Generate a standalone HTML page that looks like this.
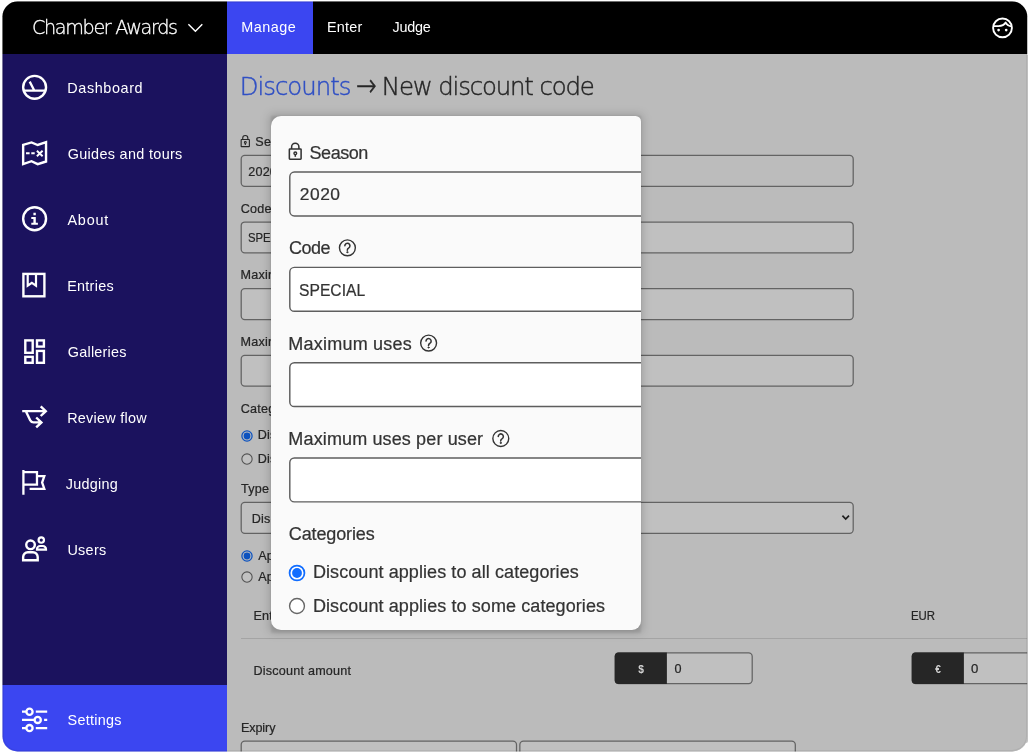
<!DOCTYPE html>
<html lang="en"><head><meta charset="utf-8"><title>New discount code</title>
<style>
html,body{margin:0;padding:0;background:#fff;}
body{width:1028px;height:755px;overflow:hidden;position:relative;font-family:'Liberation Sans',sans-serif;}
#app{position:absolute;left:0;top:0;width:1028px;height:755px;overflow:hidden;clip-path:inset(1.5px 0.8px 3.55px 2.5px round 15px);background:#bbbbbb;}
#app *{position:absolute;box-sizing:border-box;}
#app nav,#app h1,#app form{left:0;top:0;margin:0;padding:0;font:inherit;}
.t{white-space:pre;line-height:1;}
main .t,#popi .t{-webkit-text-stroke:.22px currentColor;}
main .t.lt{-webkit-text-stroke:.42px currentColor;}
main,aside,header,#popi{will-change:transform;}
header{left:0;top:0;width:1028px;height:54px;background:#000;}
.tab-on{left:227px;top:0;width:86px;height:54px;background:#3b46f1;}
aside{left:0;top:54px;width:227px;height:701px;background:#1b125e;}
.set{left:0;top:631px;width:227px;height:70px;background:#3b46f1;}
main{left:227px;top:54px;width:801px;height:701px;background:#bbbbbb;}
.hr{height:1.3px;background:#a4a4a4;}
#pop{left:271px;top:116px;width:369.7px;height:514.4px;border-radius:10px 5.5px 9px 10px;background:#fafafa;}
#popsh{left:270px;top:115px;width:371.7px;height:517.4px;background:rgba(0,0,0,.2);filter:blur(5px);border-radius:2px;}
#popsh1{left:270.8px;top:116px;width:370.6px;height:516.6px;background:rgba(0,0,0,.085);filter:blur(1.1px);}
#popc{left:0;top:0;width:369.7px;height:514.4px;border-radius:10px 5.5px 9px 10px;overflow:hidden;}
#popi{left:-271px;top:-116px;width:1028px;height:755px;}
.rstrip{position:absolute;left:1026px;top:55px;width:2px;height:688px;background:#c3c3c3;border-radius:0 0 2px 0;}
.edge{left:2.5px;top:1.5px;width:1024.7px;height:749.8px;border-radius:15px;box-shadow:inset 0 0 0 1px rgba(0,0,0,.06);pointer-events:none;}
</style></head>
<body><div class="rstrip"></div><div id="app">
<main>
<h1><span class="t lt" style="left:12.63px;top:21.00px;font-size:24.4px;letter-spacing:-0.988px;color:#2f4fc4;font-family:'DejaVu Sans Light','DejaVu Sans','Liberation Sans',sans-serif;font-weight:200;">Discounts</span>
<span class="t lt" style="left:129.09px;top:21.00px;font-size:24.4px;letter-spacing:0.000px;color:#262626;font-family:'DejaVu Sans Light','DejaVu Sans','Liberation Sans',sans-serif;font-weight:200;transform:scaleX(1.0085);transform-origin:0 0;transform:translateY(-1.4px) scale(1.01,1.3);transform-origin:0 12.2px;">→</span>
<span class="t lt" style="left:154.79px;top:21.00px;font-size:24.4px;letter-spacing:-1.144px;color:#262626;font-family:'DejaVu Sans Light','DejaVu Sans','Liberation Sans',sans-serif;font-weight:200;">New discount code</span></h1>
<form>
<svg style="left:9px;top:76px" width="20" height="22" viewBox="236 130 20 22"><g transform="translate(240.7 135.0) scale(0.7)" fill="none" stroke="#262626" stroke-width="1.6"><rect x="0.65" y="6.4" width="11.75" height="10.2" rx="0.6"/><path d="M2.9 6.4V4.3A3.65 3.65 0 0 1 10.2 4.3V6.4"/><circle cx="6.6" cy="10.7" r="1.35" stroke-width="1.4720000000000002"/><path d="M6.6 12V14.2"/></g></svg>
<span class="t" style="left:28.35px;top:82.00px;font-size:12.6px;letter-spacing:0.220px;color:#262626;">Season</span>
<svg class="bx" style="left:12px;top:99px" width="617" height="36" viewBox="239 153 617 36"><rect x="241.2" y="155.3" width="612.00" height="31.00" rx="3.6" fill="#bcbcbc" stroke="#636363" stroke-width="1.25"/></svg>
<span class="t" style="left:21.20px;top:112.00px;font-size:12.6px;letter-spacing:0.220px;color:#262626;">2020</span>
<span class="t" style="left:13.75px;top:149.00px;font-size:12.6px;letter-spacing:0.220px;color:#262626;">Code</span>
<svg class="bx" style="left:12px;top:166px" width="617" height="35" viewBox="239 220 617 35"><rect x="241.2" y="222.0" width="612.00" height="30.90" rx="3.6" fill="#c0c0c0" stroke="#636363" stroke-width="1.25"/></svg>
<span class="t" style="left:21.15px;top:178.00px;font-size:12.6px;letter-spacing:0.000px;color:#262626;transform:scaleX(.9);transform-origin:0 0;">SPECIAL</span>
<span class="t" style="left:13.60px;top:215.00px;font-size:12.6px;letter-spacing:0.220px;color:#262626;">Maximum uses</span>
<svg class="bx" style="left:12px;top:232px" width="617" height="36" viewBox="239 286 617 36"><rect x="241.2" y="288.7" width="612.00" height="30.80" rx="3.6" fill="#c0c0c0" stroke="#636363" stroke-width="1.25"/></svg>
<span class="t" style="left:13.60px;top:282.00px;font-size:12.6px;letter-spacing:0.220px;color:#262626;">Maximum uses per user</span>
<svg class="bx" style="left:12px;top:299px" width="617" height="36" viewBox="239 353 617 36"><rect x="241.2" y="355.4" width="612.00" height="30.70" rx="3.6" fill="#c0c0c0" stroke="#636363" stroke-width="1.25"/></svg>
<span class="t" style="left:13.75px;top:349.00px;font-size:12.6px;letter-spacing:0.220px;color:#262626;">Categories</span>
<svg class="rd" style="left:12.50px;top:374.50px" width="14" height="14" viewBox="0 0 14 14"><circle cx="7" cy="7" r="5.1" fill="#c1c1c1" stroke="#0c52bf" stroke-width="1.25"/><circle cx="7" cy="7" r="3.4" fill="#0c52bf"/></svg><span class="t" style="left:30.70px;top:375.00px;font-size:12.6px;letter-spacing:0.220px;color:#262626;">Discount applies to all categories</span>
<svg class="rd" style="left:12.50px;top:397.80px" width="14" height="14" viewBox="0 0 14 14"><circle cx="7" cy="7" r="5.15" fill="#c1c1c1" stroke="#505050" stroke-width="1.05"/></svg><span class="t" style="left:30.70px;top:399.00px;font-size:12.6px;letter-spacing:0.220px;color:#262626;">Discount applies to some categories</span>
<span class="t" style="left:13.95px;top:429.00px;font-size:12.6px;letter-spacing:0.220px;color:#262626;">Type</span>
<svg class="bx" style="left:12px;top:446px" width="617" height="36" viewBox="239 500 617 36"><rect x="241.2" y="502.3" width="612.00" height="31.00" rx="3.6" fill="#c0c0c0" stroke="#636363" stroke-width="1.25"/></svg>
<span class="t" style="left:24.70px;top:459.00px;font-size:12.6px;letter-spacing:0.220px;color:#262626;">Discount</span>
<svg style="left:609px;top:456px" width="20" height="16" viewBox="836 510 20 16"><path d="M842.4 515.7L845.7 519.1L849 515.7" fill="none" stroke="#1e1e1e" stroke-width="1.7"/></svg>
<svg class="rd" style="left:12.50px;top:494.90px" width="14" height="14" viewBox="0 0 14 14"><circle cx="7" cy="7" r="5.1" fill="#c1c1c1" stroke="#0c52bf" stroke-width="1.25"/><circle cx="7" cy="7" r="3.4" fill="#0c52bf"/></svg><span class="t" style="left:31.20px;top:496.00px;font-size:12.6px;letter-spacing:0.220px;color:#262626;">Applies to entry fee</span>
<svg class="rd" style="left:12.50px;top:516.40px" width="14" height="14" viewBox="0 0 14 14"><circle cx="7" cy="7" r="5.15" fill="#c1c1c1" stroke="#505050" stroke-width="1.05"/></svg><span class="t" style="left:31.20px;top:517.00px;font-size:12.6px;letter-spacing:0.220px;color:#262626;">Applies to whole order</span>
<span class="t" style="left:26.40px;top:556.00px;font-size:12.6px;letter-spacing:0.220px;color:#262626;">Entry fee</span>
<span class="t" style="left:683.56px;top:556.00px;font-size:12.6px;letter-spacing:0.000px;color:#262626;transform:scaleX(0.9047);transform-origin:0 0;">EUR</span>
<div class="hr" style="left:14.0px;top:584.0px;width:787.0px;height:1.0px;"></div>
<span class="t" style="left:26.50px;top:611.00px;font-size:12.6px;letter-spacing:0.214px;color:#262626;">Discount amount</span>
<svg class="bx" style="left:386px;top:596px" width="142" height="36" viewBox="613 650 142 36"><rect x="615.3" y="652.9" width="136.90" height="30.70" rx="3.6" fill="#c0c0c0" stroke="#636363" stroke-width="1.25"/><path d="M666.9 652.5H618.4999999999999A3.8 3.8 0 0 0 614.6999999999999 656.3V680.1500000000001A3.8 3.8 0 0 0 618.4999999999999 683.95H666.9Z" fill="#262626"/></svg>
<span class="t" style="left:411.15px;top:611.00px;font-size:10.2px;letter-spacing:0.000px;color:#d2d2d2;font-weight:700;-webkit-text-stroke:0;">$</span><span class="t" style="left:447.50px;top:609.00px;font-size:12.6px;letter-spacing:0.000px;color:#262626;transform:scaleX(1.0000);transform-origin:0 0;">0</span>
<svg class="bx" style="left:683px;top:596px" width="142" height="36" viewBox="910 650 142 36"><rect x="912.3" y="652.9" width="137.70" height="30.70" rx="3.6" fill="#c0c0c0" stroke="#636363" stroke-width="1.25"/><path d="M963.9 652.5H915.4999999999999A3.8 3.8 0 0 0 911.6999999999999 656.3V680.1500000000001A3.8 3.8 0 0 0 915.4999999999999 683.95H963.9Z" fill="#262626"/></svg>
<span class="t" style="left:708.20px;top:611.00px;font-size:10.2px;letter-spacing:0.000px;color:#d2d2d2;font-weight:700;-webkit-text-stroke:0;">€</span><span class="t" style="left:744.03px;top:609.00px;font-size:12.6px;letter-spacing:0.000px;color:#262626;transform:scaleX(1.0442);transform-origin:0 0;">0</span>
<span class="t" style="left:13.92px;top:668.00px;font-size:12.6px;letter-spacing:-0.090px;color:#262626;">Expiry</span>
<svg class="bx" style="left:12px;top:685px" width="280" height="35" viewBox="239 739 280 35"><rect x="241.2" y="741.1" width="275.30" height="30.90" rx="3.6" fill="#c0c0c0" stroke="#636363" stroke-width="1.25"/></svg>
<svg class="bx" style="left:290px;top:685px" width="281" height="35" viewBox="517 739 281 35"><rect x="519.85" y="741.1" width="275.45" height="30.90" rx="3.6" fill="#c0c0c0" stroke="#636363" stroke-width="1.25"/></svg>
</form>
</main>
<aside>
<div class="set"></div>
<nav aria-label="Manage"><span class="t" style="left:67.32px;top:27.00px;font-size:14.4px;letter-spacing:0.613px;color:#fff;">Dashboard</span><span class="t" style="left:67.65px;top:93.00px;font-size:14.4px;letter-spacing:0.337px;color:#fff;">Guides and tours</span><span class="t" style="left:67.46px;top:159.00px;font-size:14.4px;letter-spacing:0.794px;color:#fff;">About</span><span class="t" style="left:67.15px;top:225.00px;font-size:14.4px;letter-spacing:0.283px;color:#fff;">Entries</span><span class="t" style="left:67.79px;top:291.00px;font-size:14.4px;letter-spacing:0.234px;color:#fff;">Galleries</span><span class="t" style="left:67.15px;top:357.00px;font-size:14.4px;letter-spacing:0.270px;color:#fff;">Review flow</span><span class="t" style="left:65.82px;top:423.00px;font-size:14.4px;letter-spacing:0.267px;color:#fff;">Judging</span><span class="t" style="left:67.40px;top:489.00px;font-size:14.4px;letter-spacing:0.300px;color:#fff;">Users</span><span class="t" style="left:67.53px;top:659.00px;font-size:14.4px;letter-spacing:0.275px;color:#fff;">Settings</span>
<svg style="left:0;top:0" width="60" height="701" viewBox="0 54 60 701">
<g fill="none" stroke="#fff" stroke-width="2.4">
<!-- dashboard -->
<circle cx="34.6" cy="87.35" r="11.45"/><path d="M23.4 90.7H45.8M29.7 81.6L34.4 90.7" stroke-width="2.3"/>
<!-- guides -->
<path d="M23.15 144.8L31.5 142.4L37.7 145L46.04 142.15V161.5L37.7 164.1L31.5 161.2L23.15 164.1Z" stroke-linejoin="miter"/>
<path d="M26 153.2H29.6M31.3 153.2H34.7" stroke-width="2"/><path d="M36.9 150.7L42.6 156.3M42.6 150.7L36.9 156.3" stroke-width="1.9"/>
<!-- about -->
<circle cx="34.6" cy="218.75" r="11.45"/>
<!-- entries -->
<rect x="23.4" y="273.9" width="21" height="22.4"/><path d="M27.7 274V285.7L31.85 282.8L36 285.7V274" stroke-width="2.2"/>
<!-- galleries -->
<rect x="25.3" y="340.4" width="7.4" height="12.4"/><rect x="37" y="340.4" width="6.9" height="6.2"/>
<rect x="25.3" y="356.85" width="7.4" height="5.95"/><rect x="37" y="350.9" width="6.9" height="11.9"/>
<!-- review flow -->
<path d="M22.2 411.16H45.2M40.7 406.3L45.8 411.16L40.7 416M26 411.6L30.2 420.3Q31.2 422.4 33.5 422.4H40.8M36.2 417.5L41.4 422.4L36.2 427.3" stroke-linejoin="miter"/>
<!-- judging -->
<path d="M23.4 470V494.8M23.4 472.15H36.98V484.55H23.4M36.98 476.2H44.3L42.1 482.5L44.3 488.8H29.6" stroke-width="2.3"/>
<!-- users -->
<circle cx="30.54" cy="544.83" r="4.3"/><path d="M23.15 560.3V556.9A4.7 4.7 0 0 1 27.85 552.2H33A4.7 4.7 0 0 1 37.7 556.9V560.3Z"/>
<circle cx="41.27" cy="540.06" r="2.7" stroke-width="2.2"/><path d="M37 549.6V549.1A3.1 3.1 0 0 1 40.1 546H42.9A3.1 3.1 0 0 1 46 549.1V549.6Z" stroke-width="2.2"/>
<!-- settings -->
<g stroke-width="2.3"><path d="M22 711.7H26.4M35.8 711.7H47.2M22 719.9H34.6M44.1 719.9H47.2M22 728.1H26.4M35.8 728.1H47.2"/>
<circle cx="29.5" cy="711.7" r="3.1"/><circle cx="37.7" cy="719.9" r="3.1"/><circle cx="29.5" cy="728.1" r="3.1"/></g>
</g>
<!-- about "i" -->
<path fill="#fff" d="M33.4 212.7h2.4v2.6h-2.4zM31.3 217h4.5v5.7h2.1v2.15h-6.6v-2.15h2.1v-3.6h-2.1z"/>
</svg></nav>
</aside>
<header>
<div class="tab-on"></div>
<span class="t" style="left:31.90px;top:18.00px;font-size:19.2px;letter-spacing:-1.335px;color:#fff;font-family:'DejaVu Sans Light','DejaVu Sans','Liberation Sans',sans-serif;font-weight:200;-webkit-text-stroke:.3px #fff;">Chamber Awards</span>
<nav aria-label="Mode"><span class="t" style="left:241.25px;top:20.00px;font-size:14.4px;letter-spacing:0.500px;color:#fff;">Manage</span>
<span class="t" style="left:326.93px;top:20.00px;font-size:14.4px;letter-spacing:0.223px;color:#fff;">Enter</span>
<span class="t" style="left:392.60px;top:20.00px;font-size:14.4px;letter-spacing:-0.274px;color:#fff;">Judge</span></nav>
<svg style="left:180px;top:14px" width="30" height="28" viewBox="180 14 30 28"><path d="M188.4 24.3L195.4 31.2L202.3 24.3" fill="none" stroke="#fff" stroke-width="1.45"/></svg><svg style="left:985px;top:10px" width="36" height="36" viewBox="985 10 36 36"><g fill="none" stroke="#fff" stroke-width="1.9"><circle cx="1002.5" cy="27.9" r="9.4"/><path d="M993.3 26.1H998.6C1002 26.1 1004.3 24.9 1005.7 22.6C1006.8 24.7 1008.8 26.1 1011.7 26.3" stroke-linejoin="round"/></g><circle cx="998.6" cy="30.1" r="1.35" fill="#fff"/><circle cx="1006.2" cy="30.1" r="1.35" fill="#fff"/></svg>
</header>
<div id="popsh"></div><div id="popsh1"></div><div id="pop"><div id="popc"><div id="popi">
<svg style="left:280px;top:135px" width="30" height="32" viewBox="280 135 30 32"><g transform="translate(288.7 142.6) scale(1)" fill="none" stroke="#333" stroke-width="1.55"><rect x="0.65" y="6.4" width="11.75" height="10.2" rx="0.6"/><path d="M2.9 6.4V4.3A3.65 3.65 0 0 1 10.2 4.3V6.4"/><circle cx="6.6" cy="10.7" r="1.35" stroke-width="1.4260000000000002"/><path d="M6.6 12V14.2"/></g></svg>
<span class="t" style="left:309.58px;top:144.00px;font-size:18px;letter-spacing:-0.484px;color:#333;">Season</span>
<svg class="bx" style="left:287px;top:170px" width="415" height="48" viewBox="287 170 415 48"><rect x="289.8" y="172.05" width="410.20" height="43.90" rx="4.6" fill="#fafafa" stroke="#5e5e5e" stroke-width="1.45"/></svg>
<span class="t" style="left:299.68px;top:186.00px;font-size:17.4px;letter-spacing:0.561px;color:#333;">2020</span>
<span class="t" style="left:288.94px;top:239.00px;font-size:18px;letter-spacing:-0.448px;color:#333;">Code</span>
<svg class="bx" style="left:287px;top:265px" width="415" height="49" viewBox="287 265 415 49"><rect x="289.8" y="267.35" width="410.20" height="43.90" rx="4.6" fill="#fff" stroke="#5e5e5e" stroke-width="1.45"/></svg>
<span class="t" style="left:299.06px;top:282.00px;font-size:17.4px;letter-spacing:0.000px;color:#333;transform:scaleX(0.9008);transform-origin:0 0;">SPECIAL</span>
<span class="t" style="left:288.20px;top:335.00px;font-size:18px;letter-spacing:0.241px;color:#333;">Maximum uses</span>
<svg class="bx" style="left:287px;top:360px" width="415" height="49" viewBox="287 360 415 49"><rect x="289.8" y="362.65" width="410.20" height="43.90" rx="4.6" fill="#fff" stroke="#5e5e5e" stroke-width="1.45"/></svg>
<span class="t" style="left:288.37px;top:430.00px;font-size:18px;letter-spacing:0.133px;color:#333;">Maximum uses per user</span>
<svg class="bx" style="left:287px;top:455px" width="415" height="49" viewBox="287 455 415 49"><rect x="289.8" y="457.95" width="410.20" height="43.90" rx="4.6" fill="#fff" stroke="#5e5e5e" stroke-width="1.45"/></svg>
<span class="t" style="left:288.77px;top:525.00px;font-size:18px;letter-spacing:-0.126px;color:#333;">Categories</span>
<svg class="rd" style="left:286.90px;top:562.70px" width="20" height="20" viewBox="0 0 20 20"><circle cx="10" cy="10" r="7.45" fill="#fff" stroke="#116dff" stroke-width="1.75"/><circle cx="10" cy="10" r="4.9" fill="#116dff"/></svg><span class="t" style="left:312.90px;top:563.00px;font-size:18px;letter-spacing:0.082px;color:#333;">Discount applies to all categories</span>
<svg class="rd" style="left:286.90px;top:596.20px" width="20" height="20" viewBox="0 0 20 20"><circle cx="10" cy="10" r="7.45" fill="#fff" stroke="#666" stroke-width="1.4"/></svg><span class="t" style="left:312.90px;top:597.00px;font-size:18px;letter-spacing:0.088px;color:#333;">Discount applies to some categories</span>
<svg style="left:271px;top:116px" width="370" height="515" viewBox="271 116 370 515"><g transform="translate(0.00 0.00)" fill="none" stroke="#333" stroke-width="1.4" stroke-linecap="round"><circle cx="347.4" cy="247.8" r="7.95"/><path d="M344.85 245.8A2.55 2.55 0 1 1 348.8 247.9Q347.3 248.7 347.3 250.2" stroke-width="1.55"/><circle cx="347.3" cy="252.2" r="0.6" fill="#333" stroke-width="0.9"/></g><g transform="translate(81.20 95.30)" fill="none" stroke="#333" stroke-width="1.4" stroke-linecap="round"><circle cx="347.4" cy="247.8" r="7.95"/><path d="M344.85 245.8A2.55 2.55 0 1 1 348.8 247.9Q347.3 248.7 347.3 250.2" stroke-width="1.55"/><circle cx="347.3" cy="252.2" r="0.6" fill="#333" stroke-width="0.9"/></g><g transform="translate(153.40 190.70)" fill="none" stroke="#333" stroke-width="1.4" stroke-linecap="round"><circle cx="347.4" cy="247.8" r="7.95"/><path d="M344.85 245.8A2.55 2.55 0 1 1 348.8 247.9Q347.3 248.7 347.3 250.2" stroke-width="1.55"/><circle cx="347.3" cy="252.2" r="0.6" fill="#333" stroke-width="0.9"/></g></svg>
</div></div></div>
<div class="edge"></div>
</div></body></html>
